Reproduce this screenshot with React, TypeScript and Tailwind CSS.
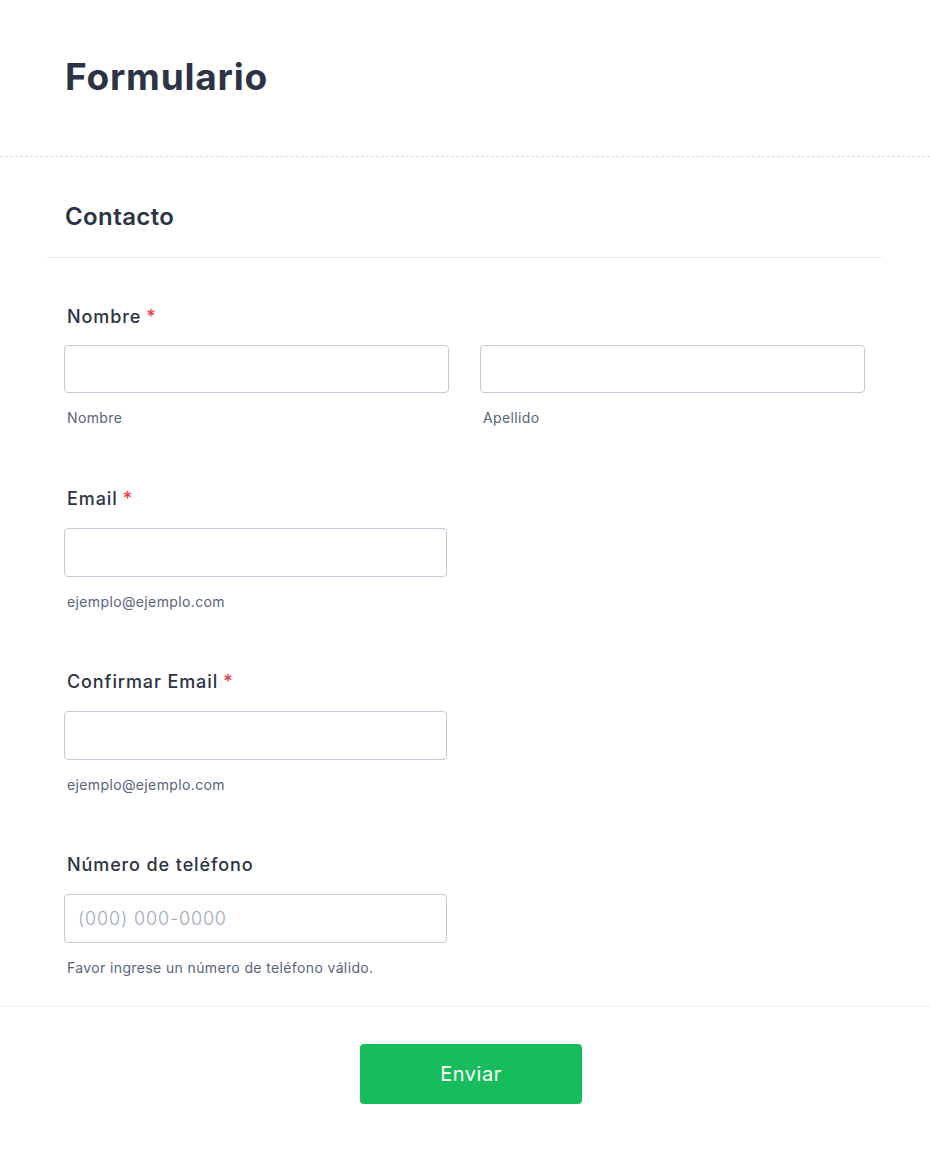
import React from "react";

const font = { fontFamily: "Inter, 'Noto Sans', sans-serif" };

function Label({ text, required }: { text: string; required?: boolean }) {
  return (
    <label className="block h-6 pl-[3px] text-[18px] leading-6 font-medium tracking-[0.9px] text-[#2c3345]">
      {text}
      {required && <span className="ml-[5px] text-[#f23a3c]">*</span>}
    </label>
  );
}

function Sub({ text }: { text: string }) {
  return (
    <div className="mt-[15px] h-5 pl-[3px] text-[14px] leading-5 tracking-[0.37px] text-[#57647e]">
      {text}
    </div>
  );
}

function Field({
  label,
  required,
  sub,
  placeholder,
}: {
  label: string;
  required?: boolean;
  sub: string;
  placeholder?: string;
}) {
  return (
    <div className="px-[17px] py-[29px]">
      <Label text={label} required={required} />
      <input
        type="text"
        placeholder={placeholder}
        className="mt-[17px] block h-[49px] w-[383px] rounded-[4px] border border-[#c3cad8] bg-white px-[13px] text-[18px] tracking-[0.85px] text-[#2c3345] outline-none placeholder:font-light placeholder:text-[#a0a8ba]"
      />
      <Sub text={sub} />
    </div>
  );
}

export default function App() {
  return (
    <div className="min-h-[1153px] w-full bg-white" style={font}>
      <header className="h-[157px] border-b border-dashed border-[#d8dde6] px-[65px] pt-[53px]">
        <h1 className="text-[37px] leading-[48px] font-bold tracking-[0.8px] text-[#2c3345]">Formulario</h1>
      </header>

      <div className="mx-[47px] w-[835px]">
        <div className="border-b border-[#e9ebf0] px-[18px] pt-[44px] pb-[24px]">
          <h2 className="text-[24px] leading-8 font-semibold tracking-[0.4px] text-[#2c3345]">Contacto</h2>
        </div>

        <div className="pt-[18px] pb-[2px]">
          <div className="px-[17px] pt-[29px] pb-[30px]">
            <Label text="Nombre" required />
            <div className="mt-[16px] flex gap-[31px]">
              <div className="w-[385px]">
                <input
                  type="text"
                  className="block h-[48px] w-full rounded-[4px] border border-[#c3cad8] bg-white px-[13px] outline-none"
                />
                <Sub text="Nombre" />
              </div>
              <div className="w-[385px]">
                <input
                  type="text"
                  className="block h-[48px] w-full rounded-[4px] border border-[#c3cad8] bg-white px-[13px] outline-none"
                />
                <Sub text="Apellido" />
              </div>
            </div>
          </div>

          <Field label="Email" required sub="ejemplo@ejemplo.com" />
          <Field label="Confirmar Email" required sub="ejemplo@ejemplo.com" />
          <Field
            label="Número de teléfono"
            sub="Favor ingrese un número de teléfono válido."
            placeholder="(000) 000-0000"
          />
        </div>
      </div>

      <div className="mt-[-3px] flex h-[148px] justify-center border-t border-b border-[#eceef3] pt-[37px] pl-[12px]">
        <button
          type="submit"
          className="h-[60px] w-[222px] rounded-[4px] bg-[#18bd5b] text-[20px] font-normal tracking-[0.5px] text-white"
        >
          Enviar
        </button>
      </div>
    </div>
  );
}
